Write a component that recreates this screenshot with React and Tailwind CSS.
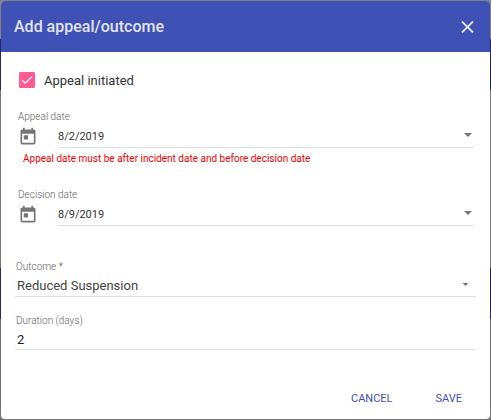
import { useState } from 'react';
import { MdToday } from 'react-icons/md';

function Caret({ className }) {
  return (
    <svg viewBox="0 0 8 4" className={className} fill="currentColor" aria-hidden="true">
      <path d="M0 0h8L4 4z" />
    </svg>
  );
}

function DateField({ id, label, value, onChange, error }) {
  return (
    <div className="pl-[3px] pr-0.5">
      <label htmlFor={id} className="block text-[10px] font-light leading-3 text-[#616161]">
        {label}
      </label>
      <div className="flex h-[25px]">
        <div className="flex w-10 shrink-0 items-center pt-0.5 text-[#757575]">
          <MdToday className="size-5" aria-hidden="true" />
        </div>
        <div className="flex min-w-0 flex-1 items-center border-b border-[#e0e0e0]">
          <input
            id={id}
            type="text"
            value={value}
            onChange={(e) => onChange(e.target.value)}
            aria-invalid={Boolean(error)}
            className="min-w-0 flex-1 bg-transparent pt-1 text-[11px] leading-4 text-[#333] outline-none"
          />
          <button type="button" aria-label={`Open ${label} calendar`} className="px-0.5 text-[#757575]">
            <Caret className="h-1 w-2" />
          </button>
        </div>
      </div>
      {error && <p className="mt-1 pl-[5px] text-[10px] leading-[14px] text-[#f00000]">{error}</p>}
    </div>
  );
}

export default function App() {
  const [initiated, setInitiated] = useState(true);
  const [appealDate, setAppealDate] = useState('8/2/2019');
  const [decisionDate, setDecisionDate] = useState('8/9/2019');
  const [outcome, setOutcome] = useState('Reduced Suspension');
  const [duration, setDuration] = useState('2');

  return (
    <div className="min-h-screen bg-[linear-gradient(#828282_39px,#25295f_39px,#25295f_90px,#787878_90px,#787878_268px,#25295f_268px,#25295f_319px,#757575_319px)] p-px font-[Roboto,sans-serif]">
      <form
        role="dialog"
        aria-labelledby="dialog-title"
        onSubmit={(e) => e.preventDefault()}
        className="overflow-hidden rounded bg-white"
      >
        <header className="flex h-[51px] items-center justify-between bg-[#3f51b5] pl-[13px] pr-4 text-[#e1e4f4]">
          <h1 id="dialog-title" className="text-base font-medium">
            Add appeal/outcome
          </h1>
          <button type="button" aria-label="Close">
            <svg viewBox="0 0 13 12" className="h-3 w-[13px]" fill="none" stroke="currentColor" strokeWidth="1.8" aria-hidden="true">
              <path d="M1 .5l11 11M12 .5l-11 11" />
            </svg>
          </button>
        </header>

        <div className="px-3.5 pt-5">
          <label className="flex h-4 items-center gap-[9px] pl-1 text-[13px] leading-4 text-[#333]">
            <span className="relative size-4">
              <input
                type="checkbox"
                checked={initiated}
                onChange={(e) => setInitiated(e.target.checked)}
                className="block size-4 appearance-none rounded-[1px] border border-[#ff5a92] checked:bg-[#ff5a92]"
              />
              {initiated && (
                <svg
                  viewBox="0 0 16 16"
                  className="pointer-events-none absolute inset-0 size-4"
                  fill="none"
                  stroke="#ffe6ef"
                  strokeWidth="1.5"
                  aria-hidden="true"
                >
                  <path d="M3.2 8.3l3 3L12.8 4.7" />
                </svg>
              )}
            </span>
            <span className="pt-0.5">Appeal initiated</span>
          </label>

          <div className="mt-[23px]">
            <DateField
              id="appeal-date"
              label="Appeal date"
              value={appealDate}
              onChange={setAppealDate}
              error="Appeal date must be after incident date and before decision date"
            />
          </div>

          <div className="mt-[23px]">
            <DateField id="decision-date" label="Decision date" value={decisionDate} onChange={setDecisionDate} />
          </div>

          <div className="mt-[35px]">
            <label htmlFor="outcome" className="block pl-px text-[10px] font-light leading-3 text-[#616161]">
              Outcome *
            </label>
            <div className="relative h-6 border-b border-[#e0e0e0]">
              <select
                id="outcome"
                value={outcome}
                onChange={(e) => setOutcome(e.target.value)}
                className="h-full w-full appearance-none bg-transparent pl-0.5 pt-0.5 text-[13px] text-[#444] outline-none"
              >
                <option>Reduced Suspension</option>
                <option>Upheld</option>
                <option>Overturned</option>
              </select>
              <Caret className="pointer-events-none absolute right-[7px] top-[10px] h-[3px] w-[7px] text-[#757575]" />
            </div>
          </div>

          <div className="mt-[18px]">
            <label htmlFor="duration" className="block pl-px text-[10px] font-light leading-3 text-[#616161]">
              Duration (days)
            </label>
            <input
              id="duration"
              type="text"
              inputMode="numeric"
              value={duration}
              onChange={(e) => setDuration(e.target.value)}
              className="block h-[23px] w-full border-b border-[#e0e0e0] bg-transparent pl-0.5 pt-0.5 text-[13px] text-[#222] outline-none"
            />
          </div>
        </div>

        <footer className="mt-[31px] flex justify-end gap-[11px] pb-0.5 pr-3 text-[11px] text-[#3f51b5]">
          <button type="button" className="h-9 px-4">
            CANCEL
          </button>
          <button type="submit" className="h-9 px-4">
            SAVE
          </button>
        </footer>
      </form>
    </div>
  );
}
